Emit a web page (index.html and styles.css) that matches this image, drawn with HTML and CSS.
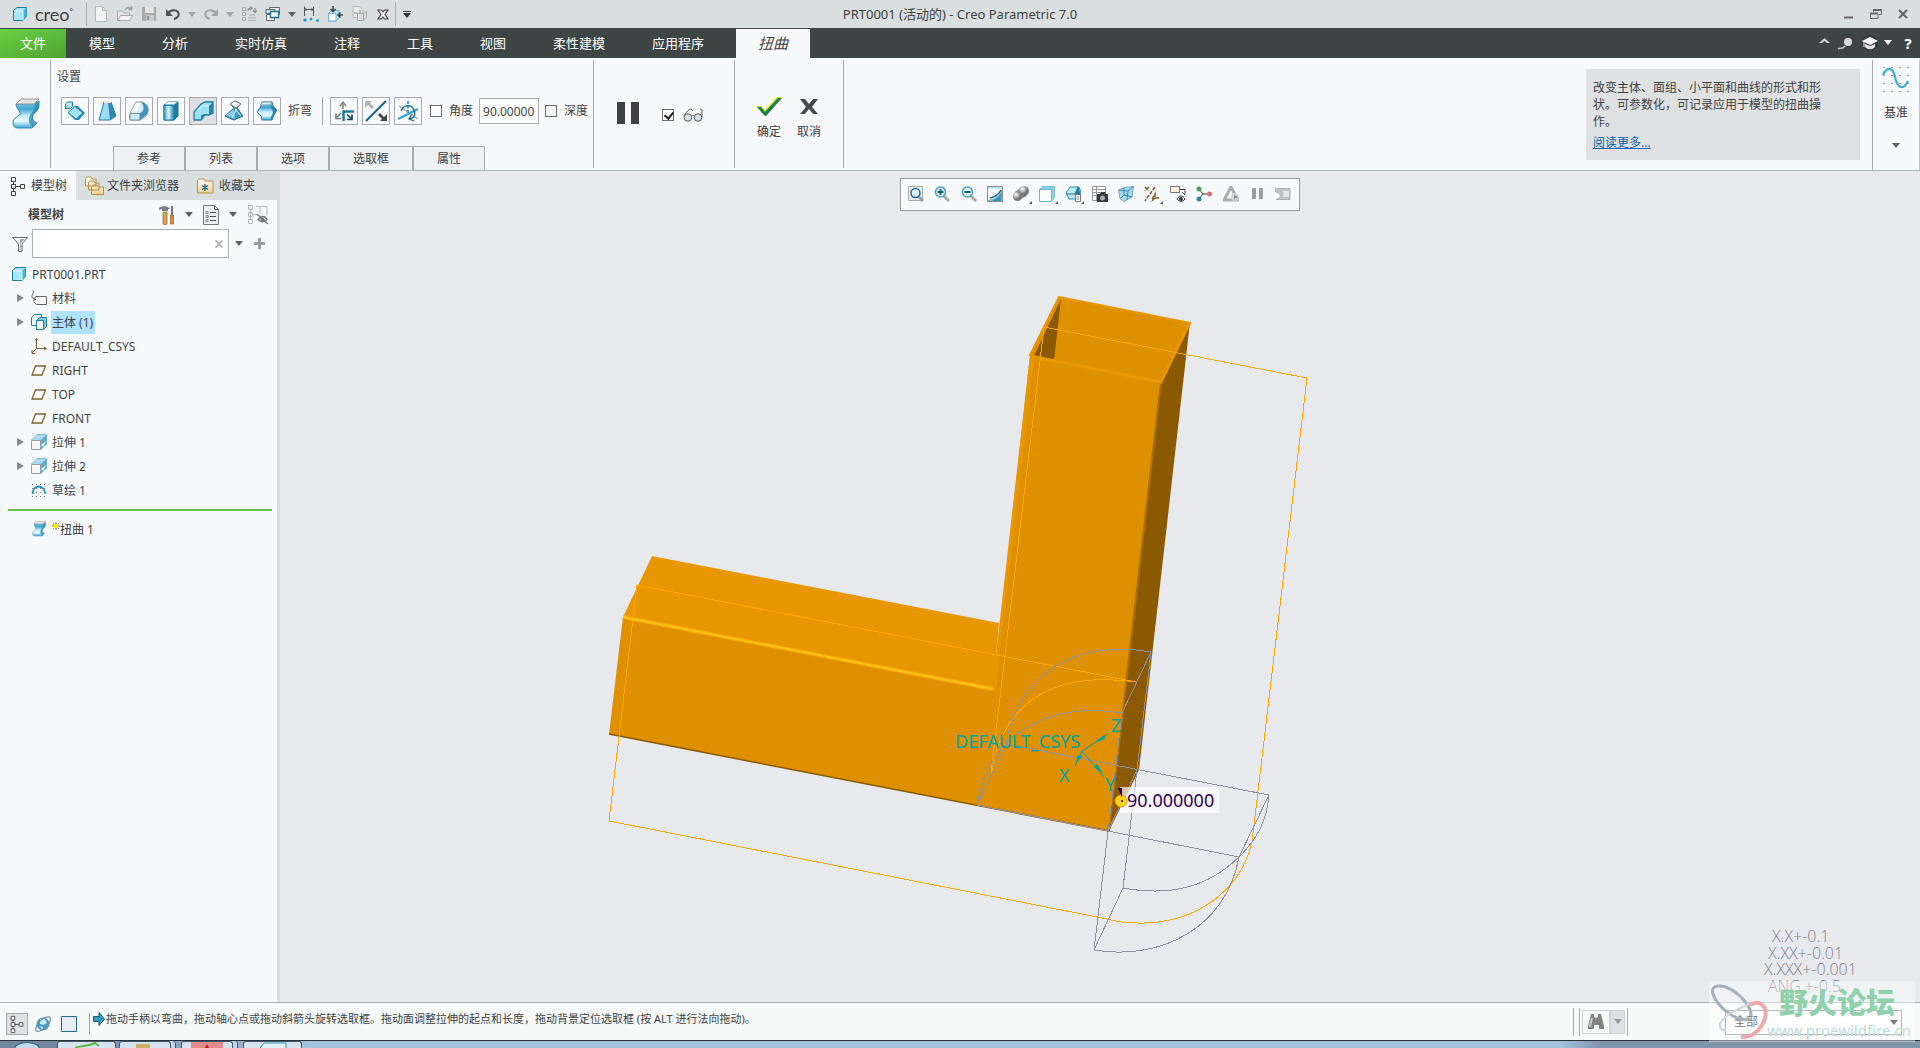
FILE: index.html
```html
<!DOCTYPE html>
<html lang="zh-CN">
<head>
  <meta charset="UTF-8">
  <meta name="viewport" content="width=device-width, initial-scale=1.0">
  <title>PRT0001 (活动的) - Creo Parametric 7.0</title>
  <link rel="stylesheet" href="styles.css">
</head>
<body>

  <!-- Shared icons -->
  <svg class="defs" width="0" height="0">
    <defs>
      <linearGradient id="steel" x1="0" x2="1"><stop offset="0" stop-color="#3a9fc8"/><stop offset=".45" stop-color="#d2f2fd"/><stop offset="1" stop-color="#2585ae"/></linearGradient>
      <linearGradient id="wave" x1="0" y1="0" x2="0" y2="1"><stop offset="0" stop-color="#8fd6f0"/><stop offset=".3" stop-color="#3fa6d0"/><stop offset=".55" stop-color="#c5ecfa"/><stop offset=".75" stop-color="#e6f9ff"/><stop offset="1" stop-color="#3fa6d0"/></linearGradient>
      <linearGradient id="sky" x1="0" y1="0" x2="0" y2="1"><stop offset="0" stop-color="#c5eefb"/><stop offset="1" stop-color="#6cbfdf"/></linearGradient>
      <linearGradient id="folder" x1="0" y1="0" x2="0" y2="1"><stop offset="0" stop-color="#fffdf4"/><stop offset="1" stop-color="#efcf8f"/></linearGradient>
      <radialGradient id="ball" cx=".35" cy=".3"><stop offset="0" stop-color="#ffffff"/><stop offset="1" stop-color="#777777"/></radialGradient>
    </defs>
    <symbol id="caret" viewBox="0 0 8 5"><path d="M0 0h8L4 5z" fill="currentColor"/></symbol>
    <symbol id="cube" viewBox="0 0 16 16">
      <path d="M1.500 4.500 5 1.500h9.500v9L11 14.500H1.500z" fill="#a5e6fd" stroke="#1f7ba6"/>
      <path d="M11 5l3.500-3.500v9L11 14z" fill="#45b3dc"/><path d="M2 5h9v9" fill="none" stroke="#e8faff"/>
    </symbol>
    <symbol id="tree" viewBox="0 0 16 20">
      <path d="M3.500 5v11M3.500 10.500h8" fill="none" stroke="#444"/>
      <path d="M1.500 1.500h4v4h-4zM1.500 8.500h4v4h-4zM1.500 15.500h4v4h-4zM10.500 8.500h4v4h-4z" fill="#fff" stroke="#444"/>
    </symbol>
    <symbol id="plane" viewBox="0 0 16 16"><path d="M4.500 4h10l-3.500 9H1z" fill="#fbfaf4" stroke="#7a602c" stroke-width="1.300"/></symbol>
    <symbol id="extrude" viewBox="0 0 16 16">
      <path d="M.5 6 6 .5h9.500V10L10 15.500" fill="#a9dcee" stroke="#7fb9cf"/><path d="M10 6l5.500-5.500V10L10 15z" fill="#5fa9c9"/><path d="M10 11l5-4-3 6z" fill="#eef7fb"/>
      <path d="M.5 6.500h9v9h-9z" fill="#f7f7f7" stroke="#9b9b9b"/>
    </symbol>
    <symbol id="warp" viewBox="0 0 28 32">
      <path d="M4 6C4 11 9 13 8 16 7 19 1 19 1 25c0 3 2 5 4 5h15l5-5c-3-1-6-5-4-8 2-3 6-5 6-10V3l-5 3z" fill="url(#wave)" stroke="#2a8cb6"/>
      <path d="M23 6l4-3v5c0 5-5 6-6 10s1 5 4 7l-4 4c-3-2-5-5-4-9 1-5 6-7 6-14z" fill="#2585ae" opacity=".75"/>
      <path d="M4 6l5-5h18l-5 5z" fill="#e3e3e3" stroke="#9a9a9a"/>
    </symbol>
  </svg>

  <header class="titlebar">
    <div class="quick">
      <svg class="logo" width="16" height="16"><use href="#cube"/></svg>
      <span class="brand">creo<sup>°</sup></span>
      <span class="rule"></span>
      <button aria-label="新建"><svg viewBox="0 0 16 16"><path d="M2.500.5h7l4 4v11h-11z" fill="#f1f1f1" stroke="#b5b9b9"/><path d="M9.500.5v4h4" fill="none" stroke="#b5b9b9"/></svg></button>
      <button aria-label="打开"><svg viewBox="0 0 16 16"><path d="M.5 14V5h5l1 2h6v7z" fill="#e9e9e9" stroke="#aaa"/><path d="M.5 14.500l3-5h12l-3 5z" fill="#f2f2f2" stroke="#aaa"/><path d="M8 4c2-3 4-3 6-1M14.500.5v3h-3" fill="none" stroke="#999" stroke-width="1.500"/></svg></button>
      <button aria-label="保存"><svg viewBox="0 0 16 16"><path d="M1 1h14v14H1z" fill="#a9abab"/><path d="M4 1h9v6H4z" fill="#e2e4e4"/><path d="M5 9h8v6H5z" fill="#c9cccc"/><path d="M6 10h2v4H6z" fill="#8f9191"/></svg></button>
      <button aria-label="撤消"><svg viewBox="0 0 16 16"><path d="M2 8c3-4 8-5 11-2 2 3 0 6-4 7" fill="none" stroke="#505252" stroke-width="2.200"/><path d="M1 3v7h7z" fill="#505252"/></svg></button>
      <svg class="caret pale"><use href="#caret"/></svg>
      <button aria-label="重做"><svg viewBox="0 0 16 16"><path d="M14 8C11 4 6 3 3 6c-2 3 0 6 4 7" fill="none" stroke="#a2a6a6" stroke-width="2.200"/><path d="M15 3v7H8z" fill="#a2a6a6"/></svg></button>
      <svg class="caret pale"><use href="#caret"/></svg>
      <button aria-label="重新生成"><svg viewBox="0 0 16 16"><path d="M1.500 1.500h3v3h-3zM1.500 6.500h3v3h-3zM1.500 11.500h3v3h-3zM7 12h8M7 14.500h8M8 9h6" fill="none" stroke="#a8acac"/><path d="M7 5c0-3 2-3 4-3M9 .5l2 1.500-2 2M14 2v4M12 4.500l2 2 2-2" fill="none" stroke="#8c9090" stroke-width="1.300"/></svg></button>
      <button aria-label="窗口"><svg viewBox="0 0 16 16"><path d="M4.500 1.500h10v7h-10zM1.500 8.500h8v6h-8z" fill="#eee" stroke="#666"/><path d="M1 3.500h9v4H1z" fill="#d4e9f2" stroke="#666"/><path d="M5.500 5.500h8v6h-8z" fill="#f4fbff" stroke="#1d6d93" stroke-width="1.300"/></svg></button>
      <svg class="caret"><use href="#caret"/></svg>
      <button aria-label="测量"><svg viewBox="0 0 16 16"><path d="M1.500 10V.5M10.500 10V.5M2 3.500h8M3.500 2L2 3.500 3.500 5M8.500 2l1.500 1.500L8.500 5" fill="none" stroke="#555"/><circle cx="2" cy="14" r="1.700" fill="#2e9ccb"/><circle cx="8" cy="13" r="1.500" fill="#2e9ccb"/><circle cx="14.500" cy="14.500" r="1.500" fill="#2e9ccb"/></svg></button>
      <button aria-label="插入"><svg viewBox="0 0 16 16"><path d="M1.500 7.500l3-3h7.500v7l-3 3.500H1.500z" fill="#b7e5f8" stroke="#69b6d4"/><path d="M1.500 7.500H9V15H1.500z" fill="#fff" stroke="#69b6d4"/><path d="M6 0v5M3.500 3L6 5.500 8.500 3M16 9h-4M13.500 6.500L11 9l2.500 2.500" fill="none" stroke="#444" stroke-width="1.600"/></svg></button>
      <button aria-label="参考"><svg viewBox="0 0 16 16"><path d="M2 .5h7l3 3v8H2z" fill="#e6e8e8" stroke="#b5b9b9"/><path d="M6.500 7.500h6v7h-6zM12.500 7.500l3-2v6l-3 2.500" fill="#dcdede" stroke="#a6a9a9"/><path d="M9 7V4M3 7h3" stroke="#888"/></svg></button>
      <button aria-label="关闭"><svg viewBox="0 0 16 16"><path d="M3 4h3.500L8 6l1.500-2H13l-3 4.500 3 4.500H9.500L8 11l-1.500 2H3l3-4.500z" fill="#fff" stroke="#444" stroke-width="1.200"/></svg></button>
      <span class="rule last"></span>
      <svg class="caret dark"><use href="#caret"/></svg>
    </div>
    <h1>PRT0001 (活动的) - Creo Parametric 7.0</h1>
    <div class="window-buttons">
      <button aria-label="最小化"><svg viewBox="0 0 12 12"><path d="M1 9.500h9" stroke="#666" stroke-width="2"/></svg></button>
      <button aria-label="还原"><svg viewBox="0 0 12 12"><path d="M3.500 4V1.500h8v5H9" fill="none" stroke="#666"/><path d="M3 2h9M0 5.500h8" stroke="#666" stroke-width="2"/><path d="M.5 5.500h7.500v5H.5z" fill="none" stroke="#666"/></svg></button>
      <button aria-label="关闭窗口"><svg viewBox="0 0 12 12"><path d="M2 2l8 8M10 2l-8 8" stroke="#666" stroke-width="2"/></svg></button>
    </div>
  </header>

  <nav class="menu">
    <button class="file">文件</button>
    <button>模型</button>
    <button>分析</button>
    <button>实时仿真</button>
    <button>注释</button>
    <button>工具</button>
    <button>视图</button>
    <button>柔性建模</button>
    <button>应用程序</button>
    <button class="current">扭曲</button>
    <div class="menu-tools">
      <svg width="12" height="20" viewBox="0 0 12 20"><path d="M0 10l5.500-5 5.500 5H8L5.500 8 3 10z" fill="#ccd3d3"/></svg>
      <svg width="20" height="20" viewBox="0 0 20 20"><circle cx="12" cy="9" r="6" fill="#4a4444"/><circle cx="12" cy="9" r="4" fill="#d4dbdc"/><path d="M9 13c-3 4-4 1-7 3" fill="none" stroke="#c3c9c9" stroke-width="1.500"/></svg>
      <svg width="18" height="20" viewBox="0 0 18 20"><circle cx="9" cy="10" r="8" fill="#343b3b"/><path d="M1 8l8-4 8 4-8 4z" fill="#fff"/><path d="M4 11l5 2 5-2v3c-3 3-7 3-10 0z" fill="#e4e4e4"/><path d="M3 8v6" stroke="#fff"/></svg>
      <svg class="caret light"><use href="#caret"/></svg>
      <button class="help" aria-label="帮助">?</button>
    </div>
  </nav>

  <section class="ribbon">
    <div class="feature"><svg width="28" height="32"><use href="#warp"/></svg></div>

    <div class="settings">
      <h2>设置</h2>
      <div class="tools">
        <button class="tool" aria-label="变换"><svg viewBox="0 0 24 24"><path d="M2.500 5l2-2h5v4.500l-2 2h-5z" fill="#96dcf5" stroke="#207ea6"/><path d="M3 5h4.500v4" fill="none" stroke="#eafaff"/><path d="M5 14l7-7h3l7 7-6 7h-4z" fill="#2d8fb9"/><path d="M5 13.500l7-6 8 6.500-7 6z" fill="#a5e4fa" stroke="#1f7ba6"/></svg></button>
        <button class="tool" aria-label="扭曲"><svg viewBox="0 0 24 24"><path d="M4 21L9 3h7l5 14-6 4z" fill="#9bdcf4" stroke="#207ea6"/><path d="M13 3h3l5 14-6 4z" fill="#2c86ad"/><path d="M9 3h7" stroke="#e7e7e7" stroke-width="2"/></svg></button>
        <button class="tool" aria-label="骨架"><svg viewBox="0 0 24 24"><path d="M3 14L9 3h7c6 3 7 10 2 15l-5 3H3z" fill="#d9eef5" stroke="#999"/><path d="M14 3c8 2 9 9 5 13l-6 5v-7c4-2 5-6 1-11z" fill="#3296c0"/><path d="M3 14.500h10V21H3z" fill="#c5ecfa" stroke="#888"/><path d="M4 13L9 4h4l-2 7z" fill="#fff"/></svg></button>
        <button class="tool" aria-label="拉伸"><svg viewBox="0 0 24 24"><path d="M5 6l4-3h10v14l-4 4H5z" fill="#73c4e2" stroke="#1d6c92"/><path d="M5 6.500h10V21H5z" fill="url(#steel)" stroke="#207ea6"/><path d="M15 6l4-3v14l-4 4z" fill="#1f7ba6"/><path d="M6 5l3-2h9l-3 2z" fill="#e5f6fc"/></svg></button>
        <button class="tool on" aria-label="折弯"><svg viewBox="0 0 24 24"><path d="M3 21v-8l7-8 4-2h8v11l-4 2h-4l-2 2v1l-2 2z" fill="#9de1f8" stroke="#1f7ba6" stroke-width="1.300"/><path d="M18 7l4-4v11l-4 2zM10 16.500l3-1.500h3l-4 3v1l-2 2z" fill="#2785ae"/><path d="M4.500 13l7-6.500h6.500" fill="none" stroke="#e6faff"/></svg></button>
        <button class="tool" aria-label="扭转"><svg viewBox="0 0 24 24"><path d="M7 5l5-3 6 3-4 4 6 8-9 4-9-4 9-8z" fill="#3c9dc4" stroke="#1d6c92"/><path d="M7 5l5-3 6 3-5 4z" fill="#f7f7f7" stroke="#888"/><path d="M3 16l8-6 1 10z" fill="#83cde9"/><path d="M12 10l6 7M14 10l-5 9" stroke="#d6f2fc" fill="none"/></svg></button>
        <button class="tool" aria-label="雕刻"><svg viewBox="0 0 24 24"><path d="M7 3h10l1 4 4 4-3 5-2 5H7l-1-4-4-4 4-6z" fill="url(#wave)" stroke="#207ea6"/><path d="M16 6l2 1 4 4-3 5-3 5c-1-3 2-6 2-8s-3-4-2-7z" fill="#2785ae"/><path d="M5 6l3-3h9l-2 3z" fill="#d5eff9" stroke="#7a9fb0"/></svg></button>
        <span class="text">折弯</span>
        <span class="divider"></span>
        <button class="tool" aria-label="方向"><svg viewBox="0 0 24 24"><path d="M11 10V4M8 7l3-4 3 4" fill="none" stroke="#888" stroke-width="1.600"/><path d="M11.500 22V12.500H22" fill="none" stroke="#1e79a3" stroke-width="2.500"/><path d="M9 14l-4 4M4 14.500v5h5" fill="none" stroke="#777" stroke-width="1.500"/><path d="M15 15.500l4 4M20 15.500v5h-5" fill="none" stroke="#17465e" stroke-width="1.700"/></svg></button>
        <button class="tool" aria-label="反向"><svg viewBox="0 0 24 24"><path d="M2 22L22 2" stroke="#166085" stroke-width="2"/><path d="M1 2h7L6 4l4 4-2 2-4-4-3 3z" fill="#b4b4b4"/><path d="M23 22h-7l2-2-4-4 2-2 4 4 3-3z" fill="#444"/></svg></button>
        <button class="tool" aria-label="轴"><svg viewBox="0 0 24 24"><path d="M3 7l19 13" stroke="#aaa" stroke-width="1.500"/><path d="M2 20L22 10" stroke="#2fa4d6" stroke-width="2.200"/><path d="M12 2v12" stroke="#2e9ccb" stroke-width="1.800" stroke-dasharray="3 1.500"/><path d="M5 12c3-7 11-7 13-1s0 8-4 9M16 15l-3 5 5 2" fill="none" stroke="#17678f" stroke-width="1.300"/></svg></button>
        <label class="check"><input type="checkbox">角度</label>
        <input class="value" type="text" value="90.00000" aria-label="角度值">
        <label class="check"><input type="checkbox">深度</label>
      </div>
      <div class="panel-tabs">
        <button>参考</button><button>列表</button><button>选项</button><button>选取框</button><button>属性</button>
      </div>
    </div>

    <div class="preview">
      <button aria-label="暂停"><svg width="22" height="22" viewBox="0 0 22 22"><path d="M0 0h8v22H0zM14 0h8v22h-8z" fill="#404042"/></svg></button>
      <label class="check"><input type="checkbox" checked><svg width="20" height="14" viewBox="0 0 20 14"><circle cx="5" cy="9.500" r="3.800" fill="#d9e0e8" stroke="#555"/><circle cx="15" cy="9.500" r="3.800" fill="#d9e0e8" stroke="#555"/><path d="M1 8C3 4 6 1 8 1l2 2M9 8c1-1 2-1 2 0M19 9V2l-2-1" fill="none" stroke="#555"/></svg></label>
    </div>

    <div class="confirm">
      <button><svg width="28" height="20" viewBox="0 0 28 20"><path d="M1 10h5l4 4L22 1h5L11 19h-2z" fill="#c9e31c"/><path d="M2 11h4l4 5L23 2h4L11 20h-1z" fill="#1d8048"/></svg>确定</button>
      <button><svg width="20" height="20" viewBox="0 0 20 20"><path d="M1 3h5l4 5 4-5h5l-6 8 6 7h-5l-4-5-4 5H1l6-7z" fill="#46484a"/></svg>取消</button>
    </div>

    <aside class="hint">
      <p>改变主体、面组、小平面和曲线的形式和形状。可参数化，可记录应用于模型的扭曲操作。</p>
      <a href="#">阅读更多...</a>
    </aside>

    <div class="datum">
      <svg width="28" height="28" viewBox="0 0 28 28"><path d="M1.500 1.500h26M1.500 9.500h26M1.500 17.500h26M1.500 25.500h26" stroke="#444" stroke-dasharray="1 7"/><path d="M1 9c4-9 10-8 12 2s8 15 13 4" fill="none" stroke="#39aade" stroke-width="2.200"/></svg>
      <span>基准</span>
      <svg class="caret"><use href="#caret"/></svg>
    </div>
  </section>

  <main class="workspace">
    <aside class="sidebar">
      <div class="side-tabs">
        <button class="current"><svg width="16" height="20"><use href="#tree"/></svg>模型树</button>
        <button class="browser"><svg width="20" height="20" viewBox="0 0 20 20"><path d="M1.500 10V2.500L3 1h4l1 2h4v7zM4.500 14V6.500L6 5h4l1 2h4v7zM7.500 18.500v-8L9 9h4l1 2h5.500v7.500z" fill="url(#folder)" stroke="#b98c48"/></svg>文件夹浏览器</button>
        <button class="favorites"><svg width="18" height="18" viewBox="0 0 18 18"><path d="M1.500 16V3.500L3 2h5l1 2h8v12z" fill="url(#folder)" stroke="#b98c48"/><path d="M9 7v7M6 8.500l6 4M12 8.500l-6 4" stroke="#17678f" stroke-width="1.300"/></svg>收藏夹</button>
      </div>
      <div class="side-head">
        <h2>模型树</h2>
        <svg width="18" height="20" viewBox="0 0 18 20"><path d="M1 3c2-2 7-2 9-1l2 2h-2v2H4V4L1 5z" fill="#777e88"/><path d="M5 7h4v12c-1 1-3 1-4 0z" fill="#d6a55d" stroke="#8e672e" stroke-width=".7"/><path d="M14 1v9" stroke="#777" stroke-width="2"/><path d="M12.500 10h3v9h-3z" fill="#cf8e45" stroke="#8e672e" stroke-width=".7"/></svg>
        <svg class="caret"><use href="#caret"/></svg>
        <svg width="18" height="20" viewBox="0 0 18 20"><path d="M1.500.5h11l4 4v15h-15z" fill="#eceff2" stroke="#777"/><path d="M12.500.5v4h4M8 7.500h6M8 11.500h6M8 15.500h6" fill="none" stroke="#555"/><path d="M4 6.500h2v2H4zM4 10.500h2v2H4zM4 14.500h2v2H4z" fill="none" stroke="#777" stroke-width=".8"/></svg>
        <svg class="caret"><use href="#caret"/></svg>
        <svg class="hide" width="20" height="20" viewBox="0 0 20 20"><path d="M.5.500h4v4h-4zM.5 7.500h4v4h-4zM.5 14.500h4v4h-4zM2.500 5v9M5 9.500h5M8 1.500h11v9M12 2v6" fill="none" stroke="#b5b8ba"/><path d="M10 14.500c3-4 7-4 9 0-3 3-6 3-9 0zM9 9l11 10" fill="none" stroke="#777" stroke-width="1.300"/><circle cx="14.500" cy="14.500" r="2" fill="#777"/></svg>
      </div>
      <div class="search">
        <svg width="16" height="16" viewBox="0 0 16 16"><path d="M.5 1.500h15L10 8v7.500H6.500V8z" fill="#fff" stroke="#666"/><path d="M8 3h5L9 7v7H8z" fill="#aaa"/></svg>
        <div class="field">
          <input type="text" aria-label="搜索模型树">
          <button aria-label="清除"><svg width="10" height="10" viewBox="0 0 10 10"><path d="M1.500 1.500l7 7M8.500 1.500l-7 7" stroke="#a0a4a6" stroke-width="1.500"/></svg></button>
        </div>
        <svg class="caret"><use href="#caret"/></svg>
        <svg class="plus" width="11" height="11" viewBox="0 0 11 11"><path d="M5.500 0v11M0 5.500h11" stroke="#999" stroke-width="3"/></svg>
      </div>
      <ul class="tree">
        <li class="root"><svg class="icon"><use href="#cube"/></svg><span>PRT0001.PRT</span></li>
        <li><i class="open"></i><svg class="icon" viewBox="0 0 16 16"><path d="M4.500 6.500h11v8h-10l-3-3z" fill="#fff" stroke="#666"/><path d="M2 .5c2 3-3 5 0 8l3 1" fill="none" stroke="#444"/></svg><span>材料</span></li>
        <li><i class="open"></i><svg class="icon" viewBox="0 0 16 16"><path d="M.5 3.500l3-3h7v9l-3 2h-7z" fill="#e9f7fc" stroke="#1f7ba6"/><path d="M5.500 6.500l3-3h7v9l-3 3h-7z" fill="#72c9e8" stroke="#1f7ba6"/><path d="M5.500 6.500h7v9h-7z" fill="#fafdff" stroke="#1f7ba6"/></svg><span class="selected">主体 (1)</span></li>
        <li><i></i><svg class="icon" viewBox="0 0 16 16"><path d="M5.500 0v10.500H15M5.500 10.500L1 15M4 2.500L5.500.500 7 2.500M13 9l2.500 1.500L13 12M1 12v3.500h3" fill="none" stroke="#7a602c"/></svg><span>DEFAULT_CSYS</span></li>
        <li><i></i><svg class="icon"><use href="#plane"/></svg><span>RIGHT</span></li>
        <li><i></i><svg class="icon"><use href="#plane"/></svg><span>TOP</span></li>
        <li><i></i><svg class="icon"><use href="#plane"/></svg><span>FRONT</span></li>
        <li><i class="open"></i><svg class="icon"><use href="#extrude"/></svg><span>拉伸 1</span></li>
        <li><i class="open"></i><svg class="icon"><use href="#extrude"/></svg><span>拉伸 2</span></li>
        <li><i></i><svg class="icon" viewBox="0 0 16 16"><path d="M1 2.500h14M1 6.500h14M1 10.500h14M1 14.500h14" stroke="#777" stroke-dasharray="1 3"/><path d="M1.500 12C2 2 13 2 14.500 12" fill="none" stroke="#2490c0" stroke-width="1.800"/></svg><span>草绘 1</span></li>
        <li class="insert"></li>
        <li><i></i><svg class="icon"><use href="#warp"/></svg><span class="fresh"><svg width="8" height="8" viewBox="0 0 8 8"><path d="M4 0v8M0 4h8M1 1l6 6M7 1L1 7" stroke="#555" stroke-width=".8"/><path d="M2 2h4v4H2z" fill="#f9ee00"/></svg>扭曲 1</span></li>
      </ul>
    </aside>

    <section class="viewport">
      <svg class="model" viewBox="280 171 1640 831" preserveAspectRatio="xMinYMin meet">
        <!-- Solid body -->
        <path d="M652 556l347 67-6 67-370-73z" fill="#e89700"/>
        <path d="M1059 297l131 26-29 59-131-27z" fill="#de9000" stroke="#e89700" stroke-width="2"/>
        <path d="M1061 299l-7 61-20-4z" fill="#8b5a00"/>
        <path d="M1161 382l29-60-51 448-30 61z" fill="#8b5a00"/>
        <path d="M623 617l370 73 37-335 131 27-52 449-500-97z" fill="#de9000"/>
        <path d="M1032 356l-38 334" stroke="#e89700" stroke-width="4"/>
        <path d="M1161 382l-52 449" stroke="#ae7000" stroke-width="2"/>
        <path d="M1030 356l131 26 29-60" fill="none" stroke="#e89700" stroke-width="3"/>
        <path d="M609 734l500 97" stroke="#8b5a00" stroke-width="1.500"/>
        <path d="M623 617l370 72" stroke="#ffa800" stroke-width="4"/>
        <path d="M623 617l370 72" stroke="#ffca20" stroke-width="1.500"/>
        <!-- Marquee: orange section and grey bend range -->
        <g fill="none" stroke="#ffa500" shape-rendering="crispEdges">
          <path d="M991 773l53-446 263 51-55 464c-12 50-60 88-131 80l-24-5-488-96 28-236 499 97"/>
          <path d="M992 773c8-60 50-104 144-91"/>
        </g>
        <g fill="none" stroke="#9092a0" shape-rendering="crispEdges">
          <path d="M977 805l29-61 263 51-30 62z"/>
          <path d="M1006 744c10-65 65-106 145-92l-29 61c-40-6-83-3-116 31-15 15-25 38-29 61"/>
          <path d="M1122 713l-28 237 29-62 28-236M1108 831l29-61"/>
          <path d="M1123 888c50 9 86-2 116-31 18-18 28-36 30-62M1094 950c65 11 132-21 145-93"/>
        </g>
        <!-- Coordinate system -->
        <g stroke="#00a5a5" fill="#00a5a5">
          <path d="M1082 751l26-17M1082 751l22 26M1082 751l-7 15" fill="none"/>
          <path d="M1096 741l8-6 1 4-8 3zM1094 767l3-3 6 10zM1076 763l1-6 4-4 1 4z" stroke="none"/>
        </g>
        <g class="csys">
          <text x="955" y="748">DEFAULT_CSYS</text><text x="1059" y="782">X</text><text x="1105" y="791">Y</text><text x="1111" y="732">Z</text>
        </g>
        <path d="M1120 787h99v26h-99z" fill="#fff" opacity=".65"/>
        <circle cx="1121" cy="801" r="6" fill="#ffd21f" stroke="#d49b00"/><circle cx="1122" cy="801" r="1" fill="#30005a"/>
        <path d="M1118 788h4v10z" fill="#30005a"/>
        <text class="angle" x="1127" y="807">90.000000</text>
        <g class="tolerance">
          <text x="1772" y="942">X.X+-0.1</text><text x="1768" y="959">X.XX+-0.01</text><text x="1764" y="975">X.XXX+-0.001</text><text x="1768" y="992">ANG.+-0.5</text>
        </g>
      </svg>

      <div class="view-tools">
        <button aria-label="重新调整"><svg viewBox="0 0 16 16"><path d="M.5.500h14v14H.5z" fill="#e9eef0" stroke="#aaa"/><circle cx="7.500" cy="7" r="4.500" fill="#e5f8ff" stroke="#17678f" stroke-width="1.500"/><path d="M11 11l4 4" stroke="#999" stroke-width="2.500"/></svg></button>
        <button aria-label="放大"><svg viewBox="0 0 16 16"><path d="M9 9l6 6" stroke="#aaa" stroke-width="3"/><circle cx="6.500" cy="6" r="5" fill="#e5f8ff" stroke="#459abd" stroke-width="1.500"/><path d="M6.500 3v6M3.500 6h6" stroke="#145b80" stroke-width="2"/></svg></button>
        <button aria-label="缩小"><svg viewBox="0 0 16 16"><path d="M9 9l6 6" stroke="#aaa" stroke-width="3"/><circle cx="6.500" cy="6" r="5" fill="#e5f8ff" stroke="#459abd" stroke-width="1.500"/><path d="M3.500 6h6" stroke="#145b80" stroke-width="2"/></svg></button>
        <button aria-label="重画"><svg viewBox="0 0 16 16"><path d="M.5.500h15v15H.5z" fill="url(#sky)" stroke="#888"/><path d="M1 3h14c-2 6-8 10-14 11z" fill="#fff"/><path d="M15 3l-1 12H5c5-3 9-6 10-12z" fill="#3b93b6"/><path d="M3 12c5-1 9-4 11-8" stroke="#145b80" fill="none" stroke-width="1.500"/></svg></button>
        <button class="more" aria-label="显示样式"><svg viewBox="0 0 16 16"><path d="M7 2L2 6l4 8 8-4z" fill="#8d8d8d"/><circle cx="11" cy="5" r="5" fill="url(#ball)"/><circle cx="4.500" cy="10.500" r="4.500" fill="url(#ball)"/></svg></button>
        <button class="more" aria-label="已保存方向"><svg viewBox="0 0 16 16"><path d="M.5 3.500l3-3h12v11l-3 4H.5z" fill="#8bd0e8" stroke="#7bb9d0"/><path d="M.5 3.500h12v12H.5z" fill="#fdfeff" stroke="#70b5d0"/></svg></button>
        <button class="more" aria-label="视图管理器"><svg viewBox="0 0 16 16"><path d="M1 7l4-6h9l2 5-2 7H4z" fill="#bfe9f8" stroke="#2488b2"/><path d="M1 8h14M10 8l3-7 2 7" fill="#2382aa" stroke="#1c7299"/><path d="M10.500 8.500h5v7h-5z" fill="#fff" stroke="#777"/><path d="M12 11h2M12 13h2" stroke="#777"/></svg></button>
        <button aria-label="捕捉"><svg viewBox="0 0 16 16"><path d="M.5.500h13v14H.5zM1 3.500h12M1 6.500h12M1 9.500h12M4.500 1v13" fill="#fff" stroke="#999"/><path d="M5 8h3l1-2h4l1 2h2v8H5z" fill="#353a3e"/><circle cx="10.500" cy="12" r="2.500" fill="#aaa"/></svg></button>
        <button aria-label="透视图"><svg viewBox="0 0 16 16"><path d="M.5 4L7 1.500 15.500.5 14 11l-8 4.500-4-3z" fill="#a9d8ea" stroke="#64a6c2"/><path d="M1 4l9 1 5-4M10 5l-1 9M3 12l3-3 8 2M6 9V2" fill="none" stroke="#3a8db0"/></svg></button>
        <button class="more" aria-label="基准显示"><svg viewBox="0 0 16 16"><path d="M1 1l4 4M5 1L1 5M11 1L6 8M5 9l-4 6M8 13l3-5v4h5M11 12l-4 4" fill="none" stroke="#7a602c" stroke-width="1.500" stroke-dasharray="4 1"/></svg></button>
        <button aria-label="注释显示"><svg viewBox="0 0 16 16"><path d="M.5.500h9v6h-9z" fill="#fff2d8" stroke="#777"/><path d="M10 3.500h5V8M12 6l3 3" fill="none" stroke="#444"/><path d="M7 13c2-4 6-4 8 0-2 3-6 3-8 0z" fill="#fff" stroke="#333"/><circle cx="11" cy="13" r="2" fill="#333"/></svg></button>
        <button aria-label="旋转中心"><svg viewBox="0 0 16 16"><path d="M3 3l4 5-4 5M7 8h6" fill="none" stroke="#444"/><circle cx="3" cy="3" r="2.500" fill="#4c9e55"/><circle cx="3" cy="13" r="2.500" fill="#2688b5"/><circle cx="13.500" cy="8" r="2.500" fill="#e5686a"/></svg></button>
        <button aria-label="仿真"><svg viewBox="0 0 16 16"><path d="M8 1l7 13H1z" fill="none" stroke="#aaadb0" stroke-width="3"/><circle cx="12" cy="11" r="4" fill="#d2d4d6"/><path d="M11 9l4 2-4 2z" fill="#888"/></svg></button>
        <button aria-label="暂停仿真"><svg viewBox="0 0 16 16"><path d="M3 2h4v11H3zM10 2h4v11h-4z" fill="#9c9ea1"/></svg></button>
        <button aria-label="结果"><svg viewBox="0 0 16 16"><path d="M0 2.500h15v11H1c6-2 6-6-1-8z" fill="#c0c2c4" stroke="#adb0b2"/><path d="M8 5h6v6H8c1-2 1-4 0-6z" fill="#e5e6e8"/></svg></button>
      </div>
    </section>
  </main>

  <footer class="status">
    <button class="pane on" aria-label="导航器"><svg width="16" height="18" viewBox="0 0 16 20"><use href="#tree"/></svg></button>
    <button class="pane" aria-label="浏览器"><svg width="18" height="18" viewBox="0 0 18 18"><circle cx="9" cy="9" r="6.500" fill="#3f9ccb"/><path d="M6 4l5 0 2 4-4 2-3-1zM5 11l4 1 0 3z" fill="#c3e8f5"/><path d="M2 13C3 7 10 1 16 2c2 4-3 11-10 14-3 1-5 0-4-3z" fill="none" stroke="#7f8c96" stroke-width="1.200"/></svg></button>
    <button class="pane" aria-label="全屏"><svg width="16" height="16" viewBox="0 0 16 16"><path d="M.5.500h15v15H.5z" fill="#e6edf3" stroke="#1e6f96"/></svg></button>
    <span class="rule"></span>
    <svg class="tip" width="12" height="14" viewBox="0 0 12 14"><path d="M.5 4.500H6v-4L11.500 7 6 13.500v-4H.5z" fill="#3699bd" stroke="#145b80"/></svg>
    <p>拖动手柄以弯曲，拖动轴心点或拖动斜箭头旋转选取框。拖动面调整拉伸的起点和长度，拖动背景定位选取框 (按 ALT 进行法向拖动)。</p>
    <div class="find">
      <button aria-label="查找"><svg width="16" height="15" viewBox="0 0 16 15"><path d="M3 0h3v3l2 1 2-1V0h3l3 12v3h-5v-4H6v4H0v-3z" fill="#838383"/><path d="M3 4L1 13h2L5 4z" fill="#ccc"/></svg></button>
      <button class="drop" aria-label="查找选项"><svg class="caret"><use href="#caret"/></svg></button>
    </div>
    <div class="filter">
      <select aria-label="选择过滤器"><option>全部</option></select>
      <svg class="caret"><use href="#caret"/></svg>
    </div>
  </footer>

  <div class="taskbar">
    <span class="orb"></span>
    <button aria-label="浏览器窗口"><svg width="28" height="6" viewBox="0 0 28 6"><path d="M2 6c6-3 10 0 20-5l4 3" fill="none" stroke="#5fb83f" stroke-width="2"/></svg></button>
    <button class="stack" aria-label="文件夹窗口"><svg width="28" height="6" viewBox="0 0 28 6"><path d="M5 2h14v4H5z" fill="#cdb265"/></svg></button>
    <button class="stack" aria-label="文档窗口"><svg width="32" height="6" viewBox="0 0 32 6"><path d="M0 0h32v6H0z" fill="#e58a8a"/><path d="M14 6l2-4 2 4z" fill="#b91919"/></svg></button>
    <button aria-label="Creo 窗口"><svg width="28" height="6" viewBox="0 0 28 6"><path d="M1 6l4-5h22v5" fill="#e0f3fa" stroke="#3994b5"/></svg></button>
  </div>

  <div class="watermark">
    <svg width="60" height="60" viewBox="0 0 60 60" fill="none">
      <path d="M41 37C31 44 8 26 4 13 1 3 13 3 23 9s20 18 19 26" stroke="#a3b2bf" stroke-width="3"/>
      <path d="M42 22C32 27 14 34 11 43c-1 4 2 7 6 6" stroke="#cdd6dd" stroke-width="2"/>
      <path d="M41 24c10-6 18 2 15 13-3 12-14 20-24 19" stroke="#ecaaae" stroke-width="4"/>
    </svg>
    <div><strong>野火论坛</strong><span>www.proewildfire.cn</span></div>
  </div>

</body>
</html>
```
FILE: styles.css
```css
* {
  margin: 0;
  padding: 0;
  box-sizing: border-box;
}

body {
  display: flex;
  flex-direction: column;
  height: 100vh;
  overflow: hidden;
  font-family: "Noto Sans", "Noto Sans CJK SC", sans-serif;
  font-size: 12px;
  line-height: 16px;
  color: #404244;
  background-color: #f8f9fb;
}

button,
input,
select {
  font: inherit;
  color: inherit;
}

button {
  border: none;
  background: none;
  cursor: pointer;
}

svg {
  display: block;
  flex: none;
}

.defs {
  position: absolute;
}

.caret {
  width: 8px;
  height: 5px;
  color: #5c5f60;
}

.caret.pale {
  color: #a2a6a6;
}

.caret.dark {
  border-top: 1px solid #333;
  height: 7px;
  padding-top: 1px;
  color: #333;
}

.caret.light {
  color: #fff;
}

/* Title bar */
.titlebar {
  display: grid;
  grid-template-columns: 1fr auto 1fr;
  align-items: center;
  height: 28px;
  background-color: #d9dfde;
}

.titlebar h1 {
  font-size: 13px;
  font-weight: normal;
}

.quick {
  display: flex;
  align-items: center;
  gap: 8px;
  padding-left: 12px;
}

.quick button,
.quick button svg {
  width: 16px;
  height: 16px;
}

.quick .caret {
  margin: 0 -1px;
}

.brand {
  width: 43px;
  font-family: Lato, sans-serif;
  font-size: 18px;
  margin-left: -1px;
}

.brand sup {
  font-size: 8px;
  line-height: 1px;
}

.quick .rule {
  width: 1px;
  height: 24px;
  margin-right: -2px;
  background-color: #a9afaf;
}

.quick .rule.last {
  margin: 0 0 0 -4px;
}

.window-buttons {
  display: flex;
  justify-content: flex-end;
  gap: 15px;
  padding-right: 11px;
}

.window-buttons svg {
  width: 12px;
  height: 12px;
}

/* Main menu */
.menu {
  display: flex;
  gap: 1px;
  height: 30px;
  padding-top: 1px;
  background-color: #3d4545;
}

.menu > button {
  padding: 0 23px 2px;
  font-size: 13px;
  color: #fff;
}

.menu > .file {
  width: 66px;
  margin-right: -1px;
  padding: 0 0 2px;
  background: linear-gradient(160deg, #69d044, #4fa42f);
}

.menu > .current {
  width: 74px;
  margin-left: 8px;
  padding: 0 0 2px;
  font-size: 15px;
  font-style: italic;
  color: #404244;
  background-color: #f8f9fb;
}

.menu-tools {
  display: flex;
  align-items: center;
  gap: 5px;
  margin-left: auto;
  padding: 0 6px 2px 0;
}

.menu-tools .help {
  width: 12px;
  margin-left: 5px;
  font-size: 15px;
  font-weight: bold;
  color: #fff;
}

/* Ribbon */
.ribbon {
  display: flex;
  height: 113px;
  border-bottom: 1px solid #a9b7bb;
}

.feature,
.settings,
.preview,
.confirm {
  position: relative;
  display: flex;
}

.feature::after,
.settings::after,
.preview::after,
.confirm::after {
  content: "";
  position: absolute;
  top: 2px;
  right: 0;
  width: 1px;
  height: 108px;
  background-color: #a6abae;
}

.feature {
  width: 51px;
  justify-content: center;
  padding: 40px 0 0;
}

.settings {
  flex-direction: column;
  width: 543px;
  padding: 10px 0 0 6px;
}

.settings h2 {
  font-size: 12px;
  font-weight: normal;
  line-height: 18px;
}

.tools {
  display: flex;
  align-items: center;
  gap: 4px;
  margin: 11px 0 0 4px;
}

.tool {
  display: flex;
  align-items: center;
  justify-content: center;
  width: 28px;
  height: 28px;
  border: 1px solid #a8aaad;
}

.tool svg {
  width: 24px;
  height: 24px;
}

.tool.on {
  background-color: #dfe0e3;
}

.text {
  margin: 0 6px 0 3px;
}

.divider {
  width: 1px;
  height: 28px;
  margin-right: 3px;
  background-color: #a8aaad;
}

.check {
  display: flex;
  align-items: center;
  gap: 7px;
  margin: 0 0 0 4px;
}

.check input {
  appearance: none;
  width: 12px;
  height: 12px;
  border: 1px solid #6c6c6c;
  background-color: #fff;
}

.check input:checked::after {
  content: "";
  display: block;
  width: 4px;
  height: 7px;
  margin: 0 0 0 3px;
  border: solid #222;
  border-width: 0 2px 2px 0;
  transform: rotate(40deg);
}

.value {
  width: 60px;
  height: 26px;
  padding: 0 3px;
  margin: 0 -2px 0 2px;
  border: 1px solid #aeb2b4;
  background-color: #fff;
}

.panel-tabs {
  display: flex;
  margin: auto 0 0 56px;
}

.panel-tabs button {
  height: 24px;
  padding: 0 23px;
  border: 1px solid #a9acae;
  border-bottom: none;
  background-color: #eef0f2;
}

.preview {
  align-items: flex-start;
  width: 141px;
  padding: 44px 0 0 23px;
  gap: 19px;
}

.preview .check {
  gap: 9px;
  margin-top: 6px;
}

.confirm {
  align-items: flex-start;
  width: 109px;
  padding: 38px 0 0 20px;
  gap: 14px;
}

.confirm button {
  display: flex;
  flex-direction: column;
  align-items: center;
  gap: 8px;
}

.hint {
  width: 274px;
  height: 91px;
  margin: 11px 12px 0 auto;
  padding: 10px 30px 0 7px;
  line-height: 17px;
  background-color: #dee0e2;
}

.hint a {
  display: inline-block;
  margin-top: 4px;
  color: #0a64ad;
}

.datum {
  display: flex;
  flex-direction: column;
  align-items: center;
  width: 48px;
  margin-top: 2px;
  padding-top: 6px;
  border-left: 1px solid #a6abae;
  border-right: 1px solid #c3c6c8;
}

.datum span {
  margin: 11px 0 22px;
}

/* Work area */
.workspace {
  display: flex;
  flex: 1;
  min-height: 0;
}

.sidebar {
  width: 280px;
  border-right: 3px solid #d9dfde;
  background-color: #f7fafb;
}

.side-tabs {
  display: flex;
  height: 29px;
  margin-right: -3px;
  background-color: #d9dfde;
}

.side-tabs button {
  display: flex;
  align-items: center;
  gap: 3px;
  padding-left: 8px;
}

.side-tabs .current {
  width: 76px;
  padding-left: 10px;
  gap: 5px;
  background-color: #f7fafb;
}

.side-tabs .favorites {
  padding-left: 17px;
  gap: 5px;
}

.side-head {
  display: flex;
  align-items: center;
  gap: 9px;
  height: 29px;
  padding-left: 28px;
}

.side-head h2 {
  margin-right: auto;
  font-size: 12px;
}

.side-head .hide {
  margin: 0 9px 0 2px;
}

.search {
  display: flex;
  align-items: center;
  height: 29px;
  padding: 0 12px;
}

.field {
  display: flex;
  align-items: center;
  flex: 1;
  height: 29px;
  margin: 0 6px 0 4px;
  padding-right: 4px;
  border: 1px solid #a4b2b6;
  background-color: #fff;
}

.field input {
  flex: 1;
  min-width: 0;
  border: none;
  outline: none;
  background: none;
}

.search .plus {
  margin-left: 11px;
}

.tree {
  margin-top: 4px;
  list-style: none;
}

.tree li {
  display: flex;
  align-items: center;
  height: 24px;
  padding-left: 17px;
}

.tree .root {
  padding-left: 11px;
}

.tree i {
  width: 14px;
}

.tree .open::before {
  content: "";
  display: block;
  width: 0;
  border: solid transparent;
  border-width: 4px 0 4px 7px;
  border-left-color: #888;
}

.tree .icon {
  width: 16px;
  height: 16px;
}

.tree span {
  display: flex;
  margin-left: 4px;
  padding: 4px 2px 3px 1px;
}

.tree .selected {
  background-color: #aee2ff;
}

.tree .insert {
  height: 2px;
  margin: 7px 5px 6px 8px;
  background-color: #66c044;
}

.viewport {
  position: relative;
  flex: 1;
  background-color: #e8e9ed;
}

.model {
  width: 100%;
  height: 100%;
}

.csys {
  font-size: 18px;
  fill: #00a5a5;
}

.angle {
  font-size: 18px;
  fill: #30005a;
}

.tolerance {
  font-family: "Open Sans", sans-serif;
  font-size: 16px;
  font-weight: 300;
  fill: #80828f;
}

/* Floating graphics toolbar */
.view-tools {
  position: absolute;
  top: 7px;
  left: 620px;
  display: flex;
  align-items: center;
  width: 400px;
  height: 33px;
  padding: 0 3px 2px 2px;
  border: 1px solid #9da0a3;
  background-color: #f8f9fb;
}

.view-tools button {
  position: relative;
  display: flex;
  flex: 1;
  justify-content: center;
}

.view-tools svg {
  width: 16px;
  height: 16px;
}

.view-tools .more::after {
  content: "";
  position: absolute;
  right: 2px;
  bottom: -2px;
  border: solid transparent;
  border-width: 3px 0 0 3px;
  border-right: 0;
  border-bottom: 3px solid #555;
}

/* Status bar */
.status {
  display: flex;
  align-items: center;
  height: 38px;
  padding: 5px 18px 0 6px;
  border-top: 1px solid #a9b7bb;
  font-size: 11px;
  background-color: #f6faf9;
}

.pane {
  display: flex;
  align-items: center;
  justify-content: center;
  width: 22px;
  height: 22px;
  margin-right: 4px;
}

.pane.on {
  border: 1px solid #a8aaad;
  background-color: #dfe0e3;
}

.status .rule {
  width: 1px;
  height: 22px;
  margin: 0 3px 0 5px;
  background-color: #a8aaad;
}

.tip {
  margin: 0 1px 10px 0;
}

.status p {
  margin: 0 auto 10px 0;
}

.find {
  display: flex;
  margin: 0 97px 5px 0;
  padding: 2px;
  border-left: 1px solid #a8aaad;
  border-right: 1px solid #a8aaad;
  box-shadow: -5px 0 0 #f6faf9, -6px 0 0 #a8aaad;
}

.find button {
  display: flex;
  align-items: center;
  justify-content: center;
  width: 28px;
  height: 24px;
  border: 1px solid #d0d0d2;
}

.find .drop {
  width: 15px;
  background-color: #dfe0e3;
}

.find .caret {
  color: #999;
}

.filter {
  position: relative;
  width: 177px;
  margin-bottom: 4px;
}

.filter select {
  width: 100%;
  height: 25px;
  padding-left: 8px;
  appearance: none;
  border: 1px solid #85888a;
  border-radius: 0;
  font-size: 12px;
  color: #111;
  background-color: #fff;
}

.filter .caret {
  position: absolute;
  top: 10px;
  right: 4px;
  color: #222;
}

/* Edge of the desktop taskbar */
.taskbar {
  display: flex;
  gap: 3px;
  height: 8px;
  border-top: 1px solid #27313c;
  background: linear-gradient(90deg, #71889f, #71889f 60px, #a5c2df 310px, #a5c2df 1560px, #8094ab 1600px, #8094ab);
}

.orb {
  width: 26px;
  height: 14px;
  margin: 1px 14px 0 14px;
  border: 1px solid #2a5a78;
  border-radius: 50%;
  background-color: #c3dbe8;
}

.taskbar button {
  display: flex;
  justify-content: center;
  width: 59px;
  height: 8px;
  border: 1px solid #45586b;
  border-bottom: none;
  border-radius: 3px 3px 0 0;
  background-color: #d6e3f1;
}

.taskbar .stack {
  width: 52px;
  margin-right: 7px;
  box-shadow: 4px 0 0 #c2d4e7, 5px 0 0 #45586b;
}

/* Forum mark */
.watermark {
  position: absolute;
  right: 5px;
  bottom: 6px;
  display: flex;
  width: 206px;
  height: 61px;
  background-color: rgba(255, 255, 255, 0.4);
  pointer-events: none;
}

.watermark div {
  display: flex;
  flex-direction: column;
}

.watermark strong {
  margin-left: 10px;
  font-family: "Noto Sans CJK SC", sans-serif;
  font-size: 29px;
  font-weight: 900;
  line-height: 40px;
  color: #8fd1ab;
  white-space: nowrap;
}

.watermark span {
  margin-left: -2px;
  font-size: 15px;
  line-height: 18px;
  color: #b5ddd7;
}
```
